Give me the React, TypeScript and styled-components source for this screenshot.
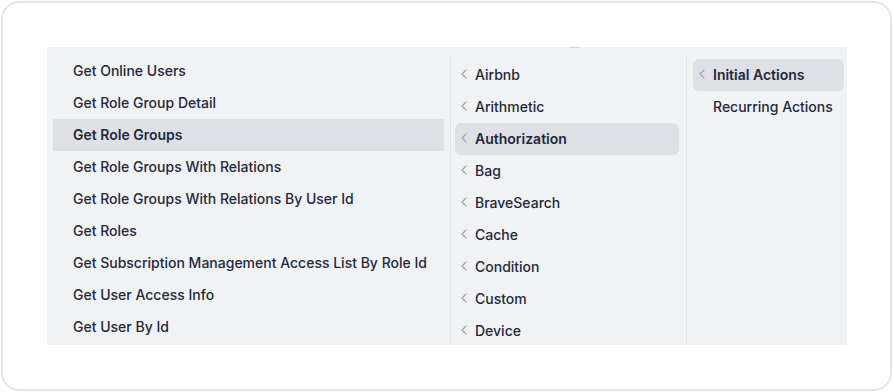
import React from 'react';
import styled, { createGlobalStyle } from 'styled-components';
import { ChevronLeft } from 'lucide-react';

const GlobalStyle = createGlobalStyle`
  html, body {
    margin: 0;
    padding: 0;
    background: #ffffff;
  }
  body {
    font-family: Inter, "Noto Sans", "Liberation Sans", sans-serif;
    -webkit-font-smoothing: antialiased;
  }
  * {
    box-sizing: border-box;
  }
`;

const Card = styled.div`
  margin: 1px;
  width: 891px;
  height: 390px;
  border: 2px solid #e4e6ea;
  border-radius: 18px;
  background: #ffffff;
  padding: 44px 0 0 44px;
`;

const Panel = styled.div`
  position: relative;
  width: 800px;
  height: 298px;
  padding-top: 8px;
  background: #f1f2f4;
  display: grid;
  grid-template-columns: 404px 236px 160px;
  overflow: hidden;
`;

// small scrollbar thumb peeking over the top edge
const ScrollThumb = styled.div`
  position: absolute;
  top: -1px;
  left: 522px;
  width: 12px;
  height: 2px;
  border-radius: 1px;
  background: #d3d6db;
`;

const Column = styled.div<{ $pad: string; $divider?: boolean }>`
  display: flex;
  flex-direction: column;
  padding: ${(p) => p.$pad};
  border-right: ${(p) => (p.$divider ? '1px solid #e0e2e6' : 'none')};
  overflow: hidden;
`;

const MethodItem = styled.div<{ $active?: boolean }>`
  flex: none;
  height: 32px;
  display: flex;
  align-items: center;
  padding: 0 0 2px 20px;
  font-size: 14px;
  font-weight: ${(p) => (p.$active ? 600 : 500)};
  color: #1e293b;
  white-space: nowrap;
  background: ${(p) => (p.$active ? '#dfe0e5' : 'transparent')};
`;

const MenuItem = styled.div<{ $active?: boolean }>`
  flex: none;
  height: 32px;
  display: flex;
  align-items: center;
  gap: 3px;
  padding: 0 0 2px 1px;
  border-radius: 6px;
  font-size: 14px;
  font-weight: ${(p) => (p.$active ? 600 : 500)};
  color: #1e293b;
  white-space: nowrap;
  background: ${(p) => (p.$active ? '#dfe0e5' : 'transparent')};
`;

const IconSlot = styled.span`
  width: 16px;
  height: 16px;
  display: flex;
  align-items: center;
  justify-content: center;
  color: #9ca3af;
`;

const methods = [
  'Get Online Users',
  'Get Role Group Detail',
  'Get Role Groups',
  'Get Role Groups With Relations',
  'Get Role Groups With Relations By User Id',
  'Get Roles',
  'Get Subscription Management Access List By Role Id',
  'Get User Access Info',
  'Get User By Id',
];

const categories = [
  'Airbnb',
  'Arithmetic',
  'Authorization',
  'Bag',
  'BraveSearch',
  'Cache',
  'Condition',
  'Custom',
  'Device',
];

const actions = [
  { label: 'Initial Actions', sub: true },
  { label: 'Recurring Actions', sub: false },
];

export default function App() {
  return (
    <>
      <GlobalStyle />
      <Card>
        <Panel>
          <ScrollThumb />
          <Column $pad="0 6px" $divider>
            {methods.map((m) => (
              <MethodItem key={m} $active={m === 'Get Role Groups'}>
                {m}
              </MethodItem>
            ))}
          </Column>
          <Column $pad="4px 7px 4px 4px" $divider>
            {categories.map((c) => (
              <MenuItem key={c} $active={c === 'Authorization'}>
                <IconSlot>
                  <ChevronLeft size={16} strokeWidth={1.75} />
                </IconSlot>
                {c}
              </MenuItem>
            ))}
          </Column>
          <Column $pad="4px 3px 4px 6px">
            {actions.map((a) => (
              <MenuItem key={a.label} $active={a.sub}>
                <IconSlot>
                  {a.sub && <ChevronLeft size={16} strokeWidth={1.75} />}
                </IconSlot>
                {a.label}
              </MenuItem>
            ))}
          </Column>
        </Panel>
      </Card>
    </>
  );
}
